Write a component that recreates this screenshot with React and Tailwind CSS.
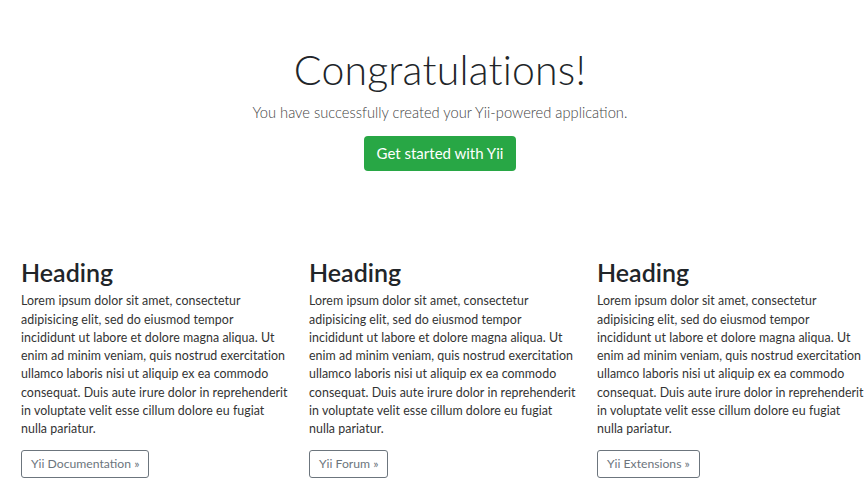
export default function App() {
  const cols = [
    { label: 'Yii Documentation »' },
    { label: 'Yii Forum »' },
    { label: 'Yii Extensions »' },
  ]
  // line breaks as they fall in the original layout
  const lorem = [
    'Lorem ipsum dolor sit amet, consectetur',
    'adipisicing elit, sed do eiusmod tempor',
    'incididunt ut labore et dolore magna aliqua. Ut',
    'enim ad minim veniam, quis nostrud exercitation',
    'ullamco laboris nisi ut aliquip ex ea commodo',
    'consequat. Duis aute irure dolor in reprehenderit',
    'in voluptate velit esse cillum dolore eu fugiat',
    'nulla pariatur.',
  ]

  return (
    <div className="w-[864px] h-[486px] overflow-hidden bg-white text-[#212529]" style={{ fontFamily: 'Lato, "Noto Sans", sans-serif' }}>
      <div className="flex flex-col items-center pt-[45px] pl-[16px]">
        <h1 className="text-[41px] font-light leading-[1.2] tracking-[0.2px]">Congratulations!</h1>
        <p className="mt-[7px] text-[14.7px] font-light leading-[1.5] text-[#444]">You have successfully created your Yii-powered application.</p>
        <button className="mt-[13px] h-[35px] px-[13px] rounded-[4px] bg-[#28a745] text-white text-[15px] leading-none">
          Get started with Yii
        </button>
      </div>

      <div className="grid grid-cols-3 mt-[86px]">
        {cols.map(c => (
          <div key={c.label} className="pl-[20px] pr-[2px]">
            <h2 className="pl-px text-[25px] font-semibold leading-[1.2]">Heading</h2>
            <div className="mt-[5px] pl-px text-[12.4px] tracking-[0.05px] leading-[18.3px] text-[#333]">
              {lorem.map(l => <div key={l} className="whitespace-nowrap">{l}</div>)}
            </div>
            <button className="ml-px mt-[11px] h-[28px] px-[9px] rounded-[3px] border border-[#6c757d] text-[#6c757d] text-[12.2px] leading-none">
              {c.label}
            </button>
          </div>
        ))}
      </div>
    </div>
  )
}
